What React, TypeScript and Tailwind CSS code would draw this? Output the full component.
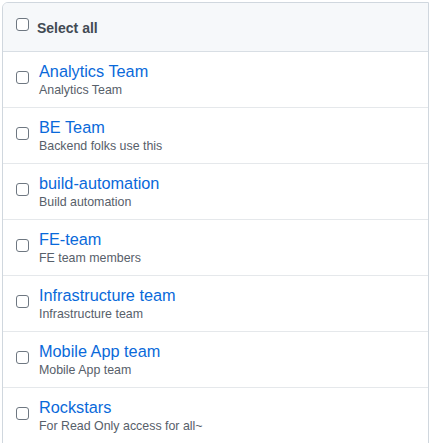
import React from 'react';

const teams = [
  { name: 'Analytics Team', description: 'Analytics Team' },
  { name: 'BE Team', description: 'Backend folks use this' },
  { name: 'build-automation', description: 'Build automation' },
  { name: 'FE-team', description: 'FE team members' },
  { name: 'Infrastructure team', description: 'Infrastructure team' },
  { name: 'Mobile App team', description: 'Mobile App team' },
  { name: 'Rockstars', description: 'For Read Only access for all~' },
];

const Checkbox = ({ className = '' }: { className?: string }) => (
  <input
    type="checkbox"
    className={`appearance-none w-[13px] h-[13px] shrink-0 rounded-[3px] border border-[#6e7781] bg-white ${className}`}
  />
);

export default function App() {
  return (
    <div className="min-h-screen bg-white pt-[2px] pl-[2px]" style={{ fontFamily: '"Liberation Sans", Arial, sans-serif' }}>
      <div className="w-[427px] border border-[#d0d7de] rounded-tl-[6px] overflow-hidden">
        <div className="flex items-start bg-[#f6f8fa] border-b border-[#d8dee4] h-[49px] pl-[13px] pt-[14px]">
          <Checkbox className="mt-[1px]" />
          <span className="ml-2 text-[14px] leading-[20px] font-bold text-[#424a53] mt-[1px]">Select all</span>
        </div>
        {teams.map(team => (
          <div key={team.name} className="flex items-start border-b border-[#e5e8eb] pl-[13px] pt-[9px] pb-[8px]">
            <Checkbox className="mt-[10px]" />
            <div className="ml-[10px] flex flex-col">
              <a href="#" className="text-[16.3px] leading-[20px] text-[#0969da]">{team.name}</a>
              <span className="text-[12.4px] leading-[18px] text-[#57606a]">{team.description}</span>
            </div>
          </div>
        ))}
      </div>
    </div>
  );
}
